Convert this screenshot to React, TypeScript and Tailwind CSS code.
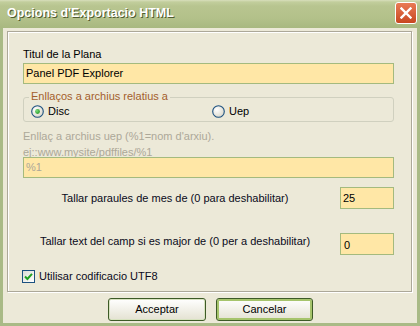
import React from "react";

const font = { fontFamily: '"Liberation Sans", Arial, sans-serif' };

function Radio({ checked }: { checked?: boolean }) {
  return (
    <svg width="13" height="13" viewBox="0 0 13 13" className="shrink-0">
      <defs>
        <radialGradient id="rg" cx="0.35" cy="0.35" r="0.8">
          <stop offset="0" stopColor="#ffffff" />
          <stop offset="1" stopColor="#d6d3c4" />
        </radialGradient>
        <radialGradient id="dot" cx="0.35" cy="0.35" r="0.8">
          <stop offset="0" stopColor="#7de07d" />
          <stop offset="1" stopColor="#1b8f1b" />
        </radialGradient>
      </defs>
      <circle cx="6.5" cy="6.5" r="5.8" fill="url(#rg)" stroke="#1c5180" strokeWidth="1.1" />
      {checked && <circle cx="6.5" cy="6.5" r="2.4" fill="url(#dot)" />}
    </svg>
  );
}

function Check() {
  return (
    <div className="w-[13px] h-[13px] border border-[#1c5180] bg-gradient-to-br from-[#dcdcd6] to-white flex items-center justify-center shrink-0">
      <svg width="9" height="9" viewBox="0 0 9 9">
        <path d="M1 4.5 L3.4 7 L8 1.8" fill="none" stroke="#21a121" strokeWidth="2" />
      </svg>
    </div>
  );
}

export default function App() {
  return (
    <div className="w-[420px] h-[326px] bg-[#a9ba86] flex flex-col text-[11px] text-black" style={font}>
      <div className="h-[28px] shrink-0 flex items-center justify-between pl-[7px] pr-[3px] bg-[linear-gradient(to_bottom,#d8dfbc_0px,#c2ce9c_2px,#b8c590_6px,#b3c18a_18px,#a8b880_28px)]">
        <span className="text-white font-bold text-[12.5px] [text-shadow:1px_1px_0_#4f5a2f] -mt-[2px]">
          Opcions d'Exportacio HTML
        </span>
        <div className="w-[22px] h-[22px] -mt-[2px] rounded-[3px] border border-white bg-gradient-to-b from-[#e97b55] to-[#c8461f] flex items-center justify-center">
          <svg width="12" height="12" viewBox="0 0 12 12">
            <path d="M1.5 1.5 L10.5 10.5 M10.5 1.5 L1.5 10.5" stroke="white" strokeWidth="2.4" strokeLinecap="square" />
          </svg>
        </div>
      </div>
      <div className="flex-1 mx-[3px] mb-[3px] bg-[#ece9d8] flex flex-col">
        <div className="mt-[3px] ml-[4px] w-[405px] h-[261px] border border-[#aca899] shadow-[inset_1px_1px_0_#fff,1px_1px_0_#fff] pt-[16px] pl-[15px] pr-[17px] flex flex-col">
          <div className="h-[13px] leading-[13px]">Titul de la Plana</div>
          <div className="mt-[2px] h-[21px] bg-[#ffe7a6] border border-[#a4ba7e] flex items-center pl-[2px]">Panel PDF Explorer</div>
          <div className="relative mt-[13px] h-[25px] border border-[#d0d0bf] rounded-[3px] flex items-center pl-[7px] pt-[3px]">
            <span className="absolute left-[5px] -top-[8px] px-[2px] bg-[#ece9d8] text-[#a35e2c] leading-[13px]">Enllaços a archius relatius a</span>
            <div className="w-[181px] flex items-center gap-[4px]">
              <Radio checked />
              <span>Disc</span>
            </div>
            <div className="flex items-center gap-[4px]">
              <Radio />
              <span>Uep</span>
            </div>
          </div>
          <div className="mt-[8px] h-[13px] leading-[13px] text-[#aca899]">Enllaç a archius uep (%1=nom d'arxiu).</div>
          <div className="mt-[3px] h-[13px] leading-[13px] text-[#aca899]">ej::www.mysite/pdffiles/%1</div>
          <div className="-mt-[2px] h-[21px] bg-[#ffe7a6] border border-[#a4ba7e] flex items-center pl-[2px] text-[#aca899]">%1</div>
          <div className="mt-[9px] h-[22px] flex items-center">
            <div className="flex-1 text-center text-[#0a0a20]">Tallar paraules de mes de (0 para deshabilitar)</div>
            <div className="ml-[13px] w-[54px] h-[22px] bg-[#ffe7a6] border border-[#a4ba7e] flex items-center pl-[2px]">25</div>
          </div>
          <div className="mt-[24px] h-[22px] flex items-center">
            <div className="flex-1 text-center text-[#0a0a20] -mt-[6px]">Tallar text del camp si es major de (0 per a deshabilitar)</div>
            <div className="ml-[13px] w-[54px] h-[22px] bg-[#ffe7a6] border border-[#a4ba7e] flex items-center pl-[3px] pt-[2px]">0</div>
          </div>
          <div className="mt-[15px] h-[13px] flex items-center gap-[4px] -ml-[1px]">
            <Check />
            <span className="text-[#0a0a20]">Utilisar codificacio UTF8</span>
          </div>
        </div>
        <div className="mt-[6px] flex justify-center gap-[10px] pl-[1px]">
          <button className="w-[98px] h-[23px] rounded-[3px] border border-[#3d5a26] bg-gradient-to-b from-white to-[#e4e2d2] shadow-[inset_0_0_0_1px_#d8e3c0] text-[11px] text-black" style={font}>
            Acceptar
          </button>
          <button className="w-[97px] h-[23px] rounded-[3px] border border-[#3d5a26] bg-gradient-to-b from-white to-[#e4e2d2] shadow-[inset_0_0_0_2px_#a6c46c] text-[11px] text-black" style={font}>
            Cancelar
          </button>
        </div>
      </div>
    </div>
  );
}
